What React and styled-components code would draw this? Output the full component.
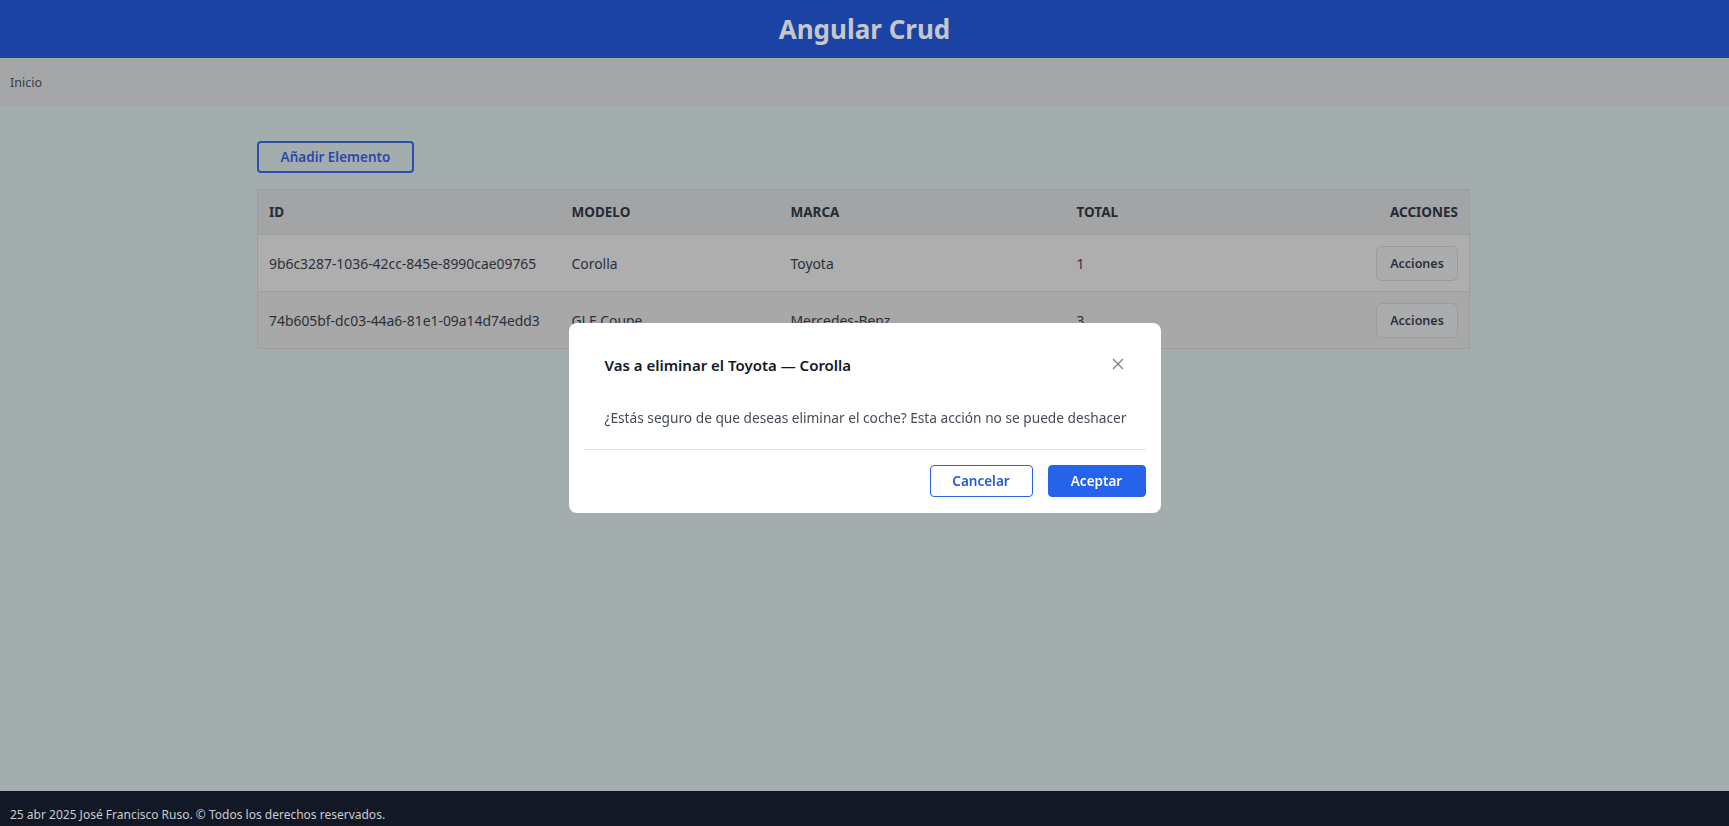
import React from "react";
import styled, { createGlobalStyle } from "styled-components";

const cars = [
  { id: "9b6c3287-1036-42cc-845e-8990cae09765", modelo: "Corolla", marca: "Toyota", total: 1 },
  { id: "74b605bf-dc03-44a6-81e1-09a14d74edd3", modelo: "GLE Coupe", marca: "Mercedes-Benz", total: 3 },
];

const GlobalStyle = createGlobalStyle`
  * { box-sizing: border-box; }
  html, body { margin: 0; padding: 0; height: 100%; }
  body {
    font-family: "Noto Sans", "Open Sans", "Liberation Sans", sans-serif;
    background: #a3adae;
  }
  #root { min-height: 100%; display: flex; flex-direction: column; }
`;

const Page = styled.div`
  min-height: 100vh;
  display: flex;
  flex-direction: column;
`;

const Header = styled.header`
  height: 58px;
  background: #1a43a3;
  display: flex;
  align-items: center;
  justify-content: center;
  h1 {
    margin: 0;
    font-size: 26px;
    font-weight: 700;
    color: #c5c7cb;
  }
`;

const Nav = styled.nav`
  height: 48px;
  background: #a5a6a8;
  display: flex;
  align-items: center;
  padding: 0 10px;
  font-size: 12.5px;
  color: #3a3d44;
`;

const Main = styled.main`
  flex: 1;
  padding: 35px 0 0 257px;
  width: 1470px;
`;

const AddButton = styled.button`
  font-family: inherit;
  width: 157px;
  height: 32px;
  border: 2px solid #2a4db4;
  border-radius: 4px;
  background: transparent;
  color: #2a48a8;
  font-size: 13.5px;
  font-weight: 600;
  margin-bottom: 16px;
  cursor: pointer;
`;

const Table = styled.table`
  width: 1213px;
  table-layout: fixed;
  border-collapse: collapse;
  border: 1px solid #9b9ea0;
  font-size: 13.9px;
  color: #2c3038;
`;

const Th = styled.th`
  height: 45px;
  padding: 0 11px;
  text-align: ${(p) => (p.right ? "right" : "left")};
  font-weight: 700;
  font-size: 13.5px;
  color: #262a33;
  background: #a3a4a6;
  border-bottom: 1px solid #9a9c9e;
  width: ${(p) => p.w || "auto"};
`;

const Tr = styled.tr`
  background: ${(p) => (p.odd ? "#a8a8a9" : "#aeaeaf")};
  border-bottom: 1px solid #9c9d9f;
`;

const Td = styled.td`
  height: 57px;
  padding: 0 11px;
  white-space: nowrap;
  text-align: ${(p) => (p.right ? "right" : "left")};
`;

const RowButton = styled.button`
  font-family: inherit;
  width: 82px;
  height: 35px;
  border: 1px solid #999a9c;
  border-radius: 6px;
  background: #abacad;
  color: #2c303b;
  font-size: 12.5px;
  font-weight: 600;
  cursor: pointer;
`;

const Footer = styled.footer`
  height: 35px;
  background: #121826;
  color: #c9ccd1;
  font-size: 12px;
  display: flex;
  align-items: flex-end;
  padding: 0 10px 3px;
`;

const Backdrop = styled.div`
  position: fixed;
  inset: 0;
  display: flex;
  justify-content: center;
  align-items: flex-start;
  padding-top: 323px;
`;

const Modal = styled.div`
  width: 592px;
  height: 190px;
  background: #fff;
  border-radius: 8px;
  display: flex;
  flex-direction: column;
`;

const ModalHead = styled.div`
  display: flex;
  align-items: center;
  justify-content: space-between;
  padding: 32px 34px 0 36px;
  h2 {
    margin: 0;
    font-size: 15px;
    line-height: 20px;
    font-weight: 600;
    color: #141923;
  }
`;

const Close = styled.button`
  border: none;
  background: none;
  padding: 0;
  width: 16px;
  height: 16px;
  display: flex;
  color: #7b7f87;
  cursor: pointer;
`;

const ModalBody = styled.p`
  margin: 0 15px;
  padding: 33px 0 22px 21px;
  font-size: 13.7px;
  line-height: 19px;
  color: #464c56;
  border-bottom: 1px solid #e3e5e8;
`;

const ModalFoot = styled.div`
  display: flex;
  justify-content: flex-end;
  gap: 15px;
  padding: 15px 15px 15px;
`;

const ModalButton = styled.button`
  font-family: inherit;
  height: 32px;
  width: ${(p) => p.w}px;
  border-radius: 4px;
  font-size: 13.5px;
  font-weight: 600;
  cursor: pointer;
  border: 1.5px solid #2563eb;
  background: ${(p) => (p.primary ? "#2563eb" : "#fff")};
  color: ${(p) => (p.primary ? "#fff" : "#2459d8")};
`;

export default function App() {
  return (
    <Page>
      <GlobalStyle />
      <Header>
        <h1>Angular Crud</h1>
      </Header>
      <Nav>Inicio</Nav>
      <Main>
        <AddButton>Añadir Elemento</AddButton>
        <Table>
          <thead>
            <tr>
              <Th w="303px">ID</Th>
              <Th w="219px">MODELO</Th>
              <Th w="286px">MARCA</Th>
              <Th w="200px">TOTAL</Th>
              <Th right>ACCIONES</Th>
            </tr>
          </thead>
          <tbody>
            {cars.map((c, i) => (
              <Tr key={c.id} odd={i % 2 === 1}>
                <Td>{c.id}</Td>
                <Td>{c.modelo}</Td>
                <Td>{c.marca}</Td>
                <Td>{c.total}</Td>
                <Td right>
                  <RowButton>Acciones</RowButton>
                </Td>
              </Tr>
            ))}
          </tbody>
        </Table>
      </Main>
      <Footer>25 abr 2025 José Francisco Ruso. © Todos los derechos reservados.</Footer>
      <Backdrop>
        <Modal>
          <ModalHead>
            <h2>Vas a eliminar el Toyota — Corolla</h2>
            <Close aria-label="Cerrar">
              <svg width="14" height="14" viewBox="0 0 14 14" fill="none" stroke="currentColor" strokeWidth="1.3">
                <path d="M2 2l10 10M12 2L2 12" />
              </svg>
            </Close>
          </ModalHead>
          <ModalBody>¿Estás seguro de que deseas eliminar el coche? Esta acción no se puede deshacer</ModalBody>
          <ModalFoot>
            <ModalButton w={103}>Cancelar</ModalButton>
            <ModalButton w={98} primary>Aceptar</ModalButton>
          </ModalFoot>
        </Modal>
      </Backdrop>
    </Page>
  );
}
